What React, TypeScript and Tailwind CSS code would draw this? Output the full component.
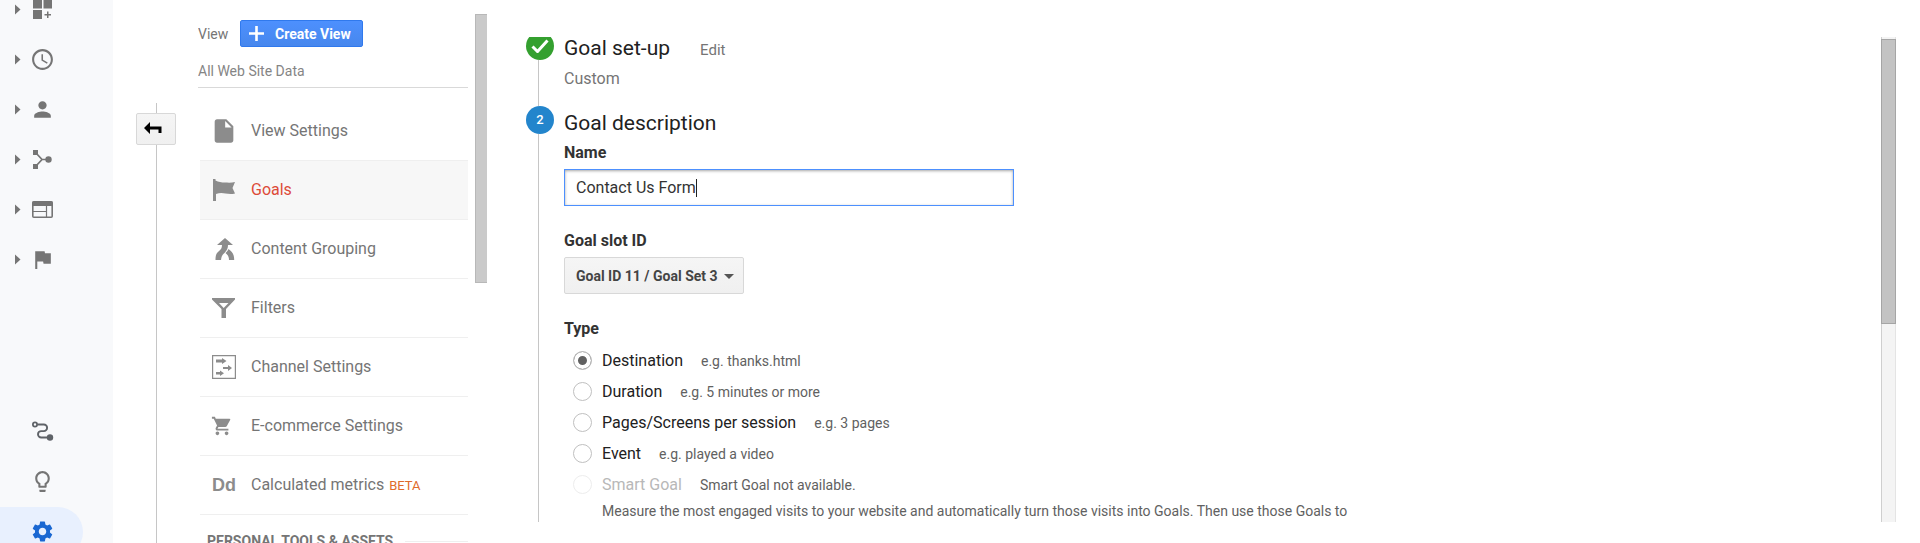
import React, { useState } from 'react';
import {
  MdAccessTime,
  MdFlag,
  MdInsertDriveFile,
  MdLightbulbOutline,
  MdPerson,
  MdSettings,
  MdShoppingCart,
} from 'react-icons/md';

interface RailItem {
  label: string;
  icon: React.ReactNode;
}

interface MenuItem {
  label: string;
  icon: React.ReactNode;
  active?: boolean;
  beta?: boolean;
}

interface GoalType {
  id: string;
  label: string;
  hint: string;
  disabled?: boolean;
}

const railIcon = 'w-[25px] h-[25px]';

const DashboardIcon = () => (
  <svg viewBox="0 0 25 25" className={railIcon} fill="currentColor">
    <path d="M3 2.500h9v9H3zM13.500 2.500h8.500v9h-8.500zM3 13h9v9H3z" />
    <path d="M17 14.500h1.500v2.500H21v1.500h-2.500V21H17v-2.500h-2.500V17H17z" />
  </svg>
);

const AcquisitionIcon = () => (
  <svg viewBox="0 0 25 25" className={railIcon} fill="currentColor">
    <path d="M3 3h5v5H3zM3 17h5v5H3z" />
    <circle cx="18.500" cy="12.500" r="3.200" />
    <path
      d="M6 6l6 6.500L6 19M12 12.500h5"
      fill="none"
      stroke="currentColor"
      strokeWidth="1.700"
    />
  </svg>
);

const BehaviorIcon = () => (
  <svg viewBox="0 0 25 25" className={railIcon} fill="none">
    <rect x="2.800" y="4.800" width="19.400" height="15.400" rx="1" stroke="currentColor" strokeWidth="1.600" />
    <path d="M2.500 4.500h20V9h-20z" fill="currentColor" />
    <path d="M3 14.500h13M16.500 9v11" stroke="currentColor" strokeWidth="1.200" />
  </svg>
);

const AttributionIcon = () => (
  <svg viewBox="0 0 25 25" className={railIcon} fill="none" stroke="currentColor">
    <circle cx="5" cy="5.500" r="2.100" strokeWidth="1.800" />
    <path
      d="M7.500 5.500h6.300a3.300 3.300 0 0 1 0 6.600h-2.600a3.200 3.200 0 0 0 0 6.400H18"
      strokeWidth="1.900"
    />
    <circle cx="20" cy="18.500" r="3.200" fill="currentColor" stroke="none" />
  </svg>
);

const GoalFlagIcon = () => (
  <svg viewBox="0 0 24 24" className="w-6 h-6" fill="currentColor">
    <path d="M1 1h2.500v1.500c3 1.500 6 2 9.500 2 3.500.2 7 .3 10-.5l-2.500 6 2.500 5.500c-3.500.8-6.500.5-9.500 0-3-.6-6-.8-9.500.5v7H1z" />
  </svg>
);

const GroupingIcon = () => (
  <svg viewBox="0 0 24 24" className="w-6 h-6" fill="currentColor">
    <path d="M13 1l8 7h-5c0 3-1 5.500-3.500 8C10 18 9.500 19.500 9 23H3.500c0-4 .5-6.500 3-8.500C9 12.500 10 11 10 8H5z" />
    <path d="M16.500 12c3.500 2.500 5.700 5 5.700 11H17c0-3-1-5-3.500-7 1.500-1.200 2.500-2.500 3-4z" />
  </svg>
);

const FilterIcon = () => (
  <svg viewBox="0 0 24 24" className="w-6 h-6" fill="currentColor">
    <path
      fillRule="evenodd"
      d="M0 2h23v1.500L14 13v9H9.500v-9L0 3.500zM7 7l4.700 5L16.500 7z"
    />
  </svg>
);

const ChannelIcon = () => (
  <svg viewBox="0 0 24 24" className="w-6 h-6" fill="currentColor">
    <path d="M.6.6h22.800v22.800H.6z" fill="none" stroke="currentColor" strokeWidth="1.200" />
    <path d="M4 4.500h6V3l4.500 3L10 9V7.500H4zM11 12h5v-2l4 3-4 3v-2h-5zM4 17h4v-1.500l4 2.700L8 21v-1.500H4z" />
  </svg>
);

const mainRail: RailItem[] = [
  { label: 'Customization', icon: <DashboardIcon /> },
  { label: 'Real-time', icon: <MdAccessTime className={railIcon} /> },
  { label: 'Audience', icon: <MdPerson className={railIcon} /> },
  { label: 'Acquisition', icon: <AcquisitionIcon /> },
  { label: 'Behaviour', icon: <BehaviorIcon /> },
  { label: 'Conversions', icon: <MdFlag className={railIcon} /> },
];

const menu: MenuItem[] = [
  { label: 'View Settings', icon: <MdInsertDriveFile className="w-7 h-7 shrink-0" /> },
  { label: 'Goals', icon: <GoalFlagIcon />, active: true },
  { label: 'Content Grouping', icon: <GroupingIcon /> },
  { label: 'Filters', icon: <FilterIcon /> },
  { label: 'Channel Settings', icon: <ChannelIcon /> },
  { label: 'E-commerce Settings', icon: <MdShoppingCart className="mr-1 w-[22px] h-[22px] shrink-0" /> },
  {
    label: 'Calculated metrics',
    icon: <span className="font-['Liberation_Sans'] text-lg font-bold">Dd</span>,
    beta: true,
  },
];

const goalTypes: GoalType[] = [
  { id: 'destination', label: 'Destination', hint: 'e.g. thanks.html' },
  { id: 'duration', label: 'Duration', hint: 'e.g. 5 minutes or more' },
  { id: 'pages', label: 'Pages/Screens per session', hint: 'e.g. 3 pages' },
  { id: 'event', label: 'Event', hint: 'e.g. played a video' },
  { id: 'smart', label: 'Smart Goal', hint: 'Smart Goal not available.', disabled: true },
];

const Rail = () => (
  <nav className="flex w-[113px] shrink-0 flex-col overflow-hidden bg-[#f8f9fb] text-[#757575]">
    <div className="-mt-[15px]">
      {mainRail.map((item) => (
        <a
          key={item.label}
          href="#"
          aria-label={item.label}
          className="flex h-[50px] items-start gap-[9px] pl-[15px] pt-3"
        >
          <svg viewBox="0 0 6 25" className="w-[6px] h-[25px]" fill="currentColor">
            <path d="M0 7.500l5.500 5-5.500 5z" />
          </svg>
          {item.icon}
        </a>
      ))}
    </div>
    <div className="-mb-[14px] mt-auto">
      <a href="#" aria-label="Attribution" className="flex h-[50px] pl-[30px] pt-3 text-[#5f6368]">
        <AttributionIcon />
      </a>
      <a href="#" aria-label="Discover" className="flex h-[50px] pl-[30px] pt-3">
        <MdLightbulbOutline className={railIcon} />
      </a>
      <a
        href="#"
        aria-label="Admin"
        className="flex h-[50px] w-[83px] rounded-r-full bg-[#e8f0fe] pl-[30px] pt-3 text-[#1967d2]"
      >
        <MdSettings className={railIcon} />
      </a>
    </div>
  </nav>
);

const BackColumn = () => (
  <div className="flex w-[85px] shrink-0 flex-col pl-[23px] pt-[103px]">
    <span className="ml-5 h-[10px] w-px bg-[#c6c6c6]" />
    <button
      type="button"
      aria-label="Back"
      className="flex h-8 w-10 shrink-0 items-center justify-center rounded-xs border border-[#d8d8d8] bg-linear-to-b from-[#f5f5f5] to-[#f0f0f0]"
    >
      <svg viewBox="0 0 18 12" className="mr-[6px] mb-[2px] h-3 w-[18px]" fill="#000">
        <path d="M0 6l6-6v4.500h11.500V11h-3V7.500H6V12z" />
      </svg>
    </button>
    <span className="ml-5 w-px flex-1 bg-[#c6c6c6]" />
  </div>
);

const ViewColumn = () => (
  <aside className="flex w-[289px] shrink-0 justify-between overflow-hidden">
    <div className="w-[270px]">
      <div className="flex items-center gap-3 pt-5">
        <span className="w-[30px] text-sm text-[#757575]">View</span>
        <button
          type="button"
          className="flex h-[27px] w-[123px] items-center gap-[11px] rounded-xs border border-[#3079ed] bg-linear-to-b from-[#4d90fe] to-[#4787ed] pl-2 text-sm font-bold text-white"
        >
          <svg viewBox="0 0 15 15" className="h-[15px] w-[15px]" fill="currentColor">
            <path d="M6.200 0h2.600v6.200H15v2.600H8.800V15H6.200V8.800H0V6.200h6.200z" />
          </svg>
          Create View
        </button>
      </div>
      <div className="mt-[14px] border-b border-[#d9d9d9] pb-[6px] text-sm text-[#858585]">
        All Web Site Data
      </div>
      <ul className="ml-[2px] mt-[14px] text-[#757575]">
        {menu.map((item) => (
          <li key={item.label}>
            <a
              href="#"
              className={
                item.active
                  ? 'flex h-[59px] items-center gap-[15px] border-b border-[#efefef] bg-[#f7f7f7] pl-3 text-[#dd4b39]'
                  : 'flex h-[59px] items-center gap-[15px] border-b border-[#efefef] pl-3'
              }
            >
              <span className="flex w-6 justify-center text-[#8c8c8c]">{item.icon}</span>
              <span>
                {item.label}
                {item.beta && <span className="ml-[5px] text-[13px] text-[#e06a2b]">BETA</span>}
              </span>
            </a>
          </li>
        ))}
      </ul>
      <div className="mt-4 flex items-center gap-3 pl-[9px] text-sm font-bold whitespace-nowrap text-[#757575]">
        PERSONAL TOOLS &amp; ASSETS
        <span className="h-px flex-1 bg-[#efefef]" />
      </div>
    </div>
    <div className="mt-[14px] h-[269px] w-3 border border-r-0 border-[#b8b8b8] bg-[#cacaca]" />
  </aside>
);

const GoalForm = () => {
  const [name, setName] = useState('Contact Us Form');
  const [type, setType] = useState('destination');

  return (
    <div className="-mt-[5px] flex-1">
      <section className="flex h-[74px] gap-[10px]">
        <div className="flex w-7 flex-col">
          <span className="flex h-7 w-7 shrink-0 items-center justify-center rounded-full bg-[#34a02f]">
            <svg viewBox="0 0 18 14" className="h-[14px] w-[18px]" fill="none">
              <path d="M1.500 7.500l5 5L16.500 1.500" stroke="#fff" strokeWidth="3" />
            </svg>
          </span>
          <span className="ml-3 w-px flex-1 bg-[#c6c6c6]" />
        </div>
        <div className="pt-[2px]">
          <div className="flex items-baseline gap-[30px]">
            <h2 className="text-[21px] leading-7 text-[#212121]">Goal set-up</h2>
            <a href="#" className="text-[15px] leading-6 text-[#757575]">
              Edit
            </a>
          </div>
          <p className="mt-[5px] text-[#757575]">Custom</p>
        </div>
      </section>

      <section className="flex gap-[10px]">
        <div className="flex w-7 flex-col">
          <span className="flex h-7 w-7 shrink-0 items-center justify-center rounded-full bg-[#2385cc] text-[13px] font-medium text-white">
            2
          </span>
          <span className="ml-3 w-px flex-1 bg-[#c6c6c6]" />
        </div>
        <form className="flex-1 pt-[3px]">
          <h2 className="text-[21px] leading-7 text-[#212121]">Goal description</h2>

          <label htmlFor="goal-name" className="mt-1 block font-bold text-[#333]">
            Name
          </label>
          <label
            htmlFor="goal-name"
            className="mt-1 flex h-[37px] w-[450px] items-center border border-[#4d90fe] px-[11px] shadow-[inset_0_1px_3px_rgba(0,0,0,0.35)]"
          >
            <input
              id="goal-name"
              type="text"
              value={name}
              onChange={(e) => setName(e.target.value)}
              className="field-sizing-content text-[#333] caret-transparent outline-none"
            />
            <span className="h-[18px] w-px bg-[#212121]" />
          </label>

          <label htmlFor="goal-slot" className="mt-[23px] block font-bold text-[#333]">
            Goal slot ID
          </label>
          <div className="relative mt-1 w-[180px]">
            <select
              id="goal-slot"
              className="block h-[37px] w-full appearance-none rounded-xs border border-[#d8d8d8] bg-linear-to-b from-[#f5f5f5] to-[#f0f0f0] pl-[11px] text-sm font-bold text-[#444]"
            >
              <option>Goal ID 11 / Goal Set 3</option>
            </select>
            <svg
              viewBox="0 0 10 5"
              className="pointer-events-none absolute right-[10px] top-[17px] h-[5px] w-[10px]"
              fill="#555"
            >
              <path d="M0 0h10L5 5z" />
            </svg>
          </div>

          <fieldset className="mt-[23px]">
            <legend className="mb-1 font-bold text-[#333]">Type</legend>
            {goalTypes.map((goal) => (
              <div key={goal.id} className="flex h-[31px] items-center pl-[9px]">
                <input
                  id={goal.id}
                  type="radio"
                  name="goal-type"
                  checked={type === goal.id}
                  disabled={goal.disabled}
                  onChange={() => setType(goal.id)}
                  className="h-[19px] w-[19px] appearance-none rounded-full border border-[#c0c0c0] checked:bg-[#616161] checked:shadow-[inset_0_0_0_4px_#fff] disabled:border-[#ededed]"
                />
                <label
                  htmlFor={goal.id}
                  className={goal.disabled ? 'ml-[10px] text-[#b8b8b8]' : 'ml-[10px] text-[#212121]'}
                >
                  {goal.label}
                </label>
                <span className="ml-[18px] text-sm text-[#616161]">{goal.hint}</span>
              </div>
            ))}
            <p className="pl-[38px] text-sm leading-[22px] text-[#616161]">
              Measure the most engaged visits to your website and automatically turn those visits
              into Goals. Then use those Goals to
            </p>
          </fieldset>
        </form>
      </section>
    </div>
  );
};

const App: React.FC = () => {
  return (
    <div className="flex h-screen overflow-hidden bg-white font-[Roboto,sans-serif] text-base">
      <Rail />
      <BackColumn />
      <ViewColumn />
      <main className="flex min-w-0 flex-1 pb-[21px] pl-[39px] pr-6 pt-[37px]">
        <div className="flex min-w-0 flex-1 overflow-hidden">
          <GoalForm />
          <div className="w-[15px] shrink-0 border-x border-l-[#cfcfcf] border-r-[#e4e4e4] bg-[#f4f4f4] pt-[2px]">
            <div className="-mx-px h-[285px] border border-[#a5a5a5] bg-[#c3c3c3]" />
          </div>
        </div>
      </main>
    </div>
  );
};

export default App;
